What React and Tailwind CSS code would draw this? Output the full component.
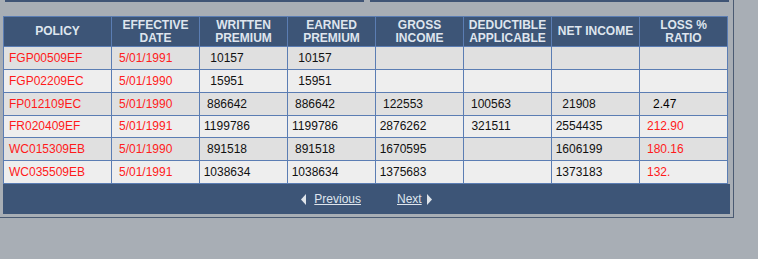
import React from "react";

const columns = [
    ["POLICY"],
    ["EFFECTIVE", "DATE"],
    ["WRITTEN", "PREMIUM"],
    ["EARNED", "PREMIUM"],
    ["GROSS", "INCOME"],
    ["DEDUCTIBLE", "APPLICABLE"],
    ["NET INCOME"],
    ["LOSS %", "RATIO"],
];

const rows = [
    ["FGP00509EF", "5/01/1991", "10157", "10157", "", "", "", ""],
    ["FGP02209EC", "5/01/1990", "15951", "15951", "", "", "", ""],
    ["FP012109EC", "5/01/1990", "886642", "886642", "122553", "100563", "21908", "2.47"],
    ["FR020409EF", "5/01/1991", "1199786", "1199786", "2876262", "321511", "2554435", "212.90"],
    ["WC015309EB", "5/01/1990", "891518", "891518", "1670595", "", "1606199", "180.16"],
    ["WC035509EB", "5/01/1991", "1038634", "1038634", "1375683", "", "1373183", "132."],
];

// cellule de montant : centrée sur une petite zone
const Amount = ({ value }) => (
    <span className="block w-[51px] pl-[3px] text-center">{value}</span>
);

const Ratio = ({ value }) => {
    if (!value) return null;
    const red = value !== "2.47";
    return (
        <span className={red ? "pl-[7px] text-[#ff1a1a]" : "pl-[13px] text-black"}>
            {value}
        </span>
    );
};

const Triangle = ({ dir }) => (
    <svg width="5" height="11" viewBox="0 0 5 11" className="block">
        {dir === "left" ? (
            <polygon points="5,0 0,5.5 5,11" fill="#dfe4ea" />
        ) : (
            <polygon points="0,0 5,5.5 0,11" fill="#dfe4ea" />
        )}
    </svg>
);

export default function App() {
    const grid = "grid grid-cols-[108px_repeat(7,88px)]";

    return (
        <div className="w-[758px] h-[259px] bg-[#a8aeb5] font-['Liberation_Sans',Arial,sans-serif] text-[12px] overflow-hidden">
            <div className="w-[734px] h-[218px] border-r border-b border-[#4a5a72]">
                {/* barres du haut */}
                <div className="flex gap-[6px] pl-[5px]">
                    <div className="w-[359px] h-[2px] bg-[#3f5475]" />
                    <div className="w-[359px] h-[2px] bg-[#3f5475]" />
                </div>

                <div className="mt-[14px] ml-[3px]">
                    <div className="w-[725px] border-l border-t border-[#5b7db3]">
                        {/* en-tête */}
                        <div className={grid}>
                            {columns.map((lines, i) => (
                                <div
                                    key={i}
                                    className="h-[30px] flex flex-col items-center justify-center bg-[#3d5577] border-r border-b border-[#5b7db3] text-[#dfe5ee] font-bold leading-[13px] text-center"
                                >
                                    {lines.map((l) => (
                                        <span key={l}>{l}</span>
                                    ))}
                                </div>
                            ))}
                        </div>

                        {/* lignes */}
                        {rows.map((row, r) => (
                            <div
                                key={row[0]}
                                className={`${grid} ${r % 2 === 0 ? "bg-[#e0e0e0]" : "bg-[#eeeeee]"}`}
                            >
                                {row.map((cell, c) => (
                                    <div
                                        key={c}
                                        className="h-[22.85px] flex items-center border-r border-b border-[#5b7db3] whitespace-nowrap"
                                    >
                                        {c === 0 && <span className="pl-[5px] text-[#ff1a1a]">{cell}</span>}
                                        {c === 1 && <span className="pl-[7px] text-[#ff2020]">{cell}</span>}
                                        {c > 1 && c < 7 && cell && (
                                            <span className="text-[#111]">
                                                <Amount value={cell} />
                                            </span>
                                        )}
                                        {c === 7 && <Ratio value={cell} />}
                                    </div>
                                ))}
                            </div>
                        ))}
                    </div>

                    {/* pied de tableau */}
                    <div className="w-[727px] h-[30px] bg-[#3d5577] flex items-center justify-center text-[#dfe5ee]">
                        <Triangle dir="left" />
                        <span className="ml-[8px] underline">Previous</span>
                        <span className="ml-[36px] underline">Next</span>
                        <span className="ml-[5px]">
                            <Triangle dir="right" />
                        </span>
                    </div>
                </div>
            </div>
        </div>
    );
}
